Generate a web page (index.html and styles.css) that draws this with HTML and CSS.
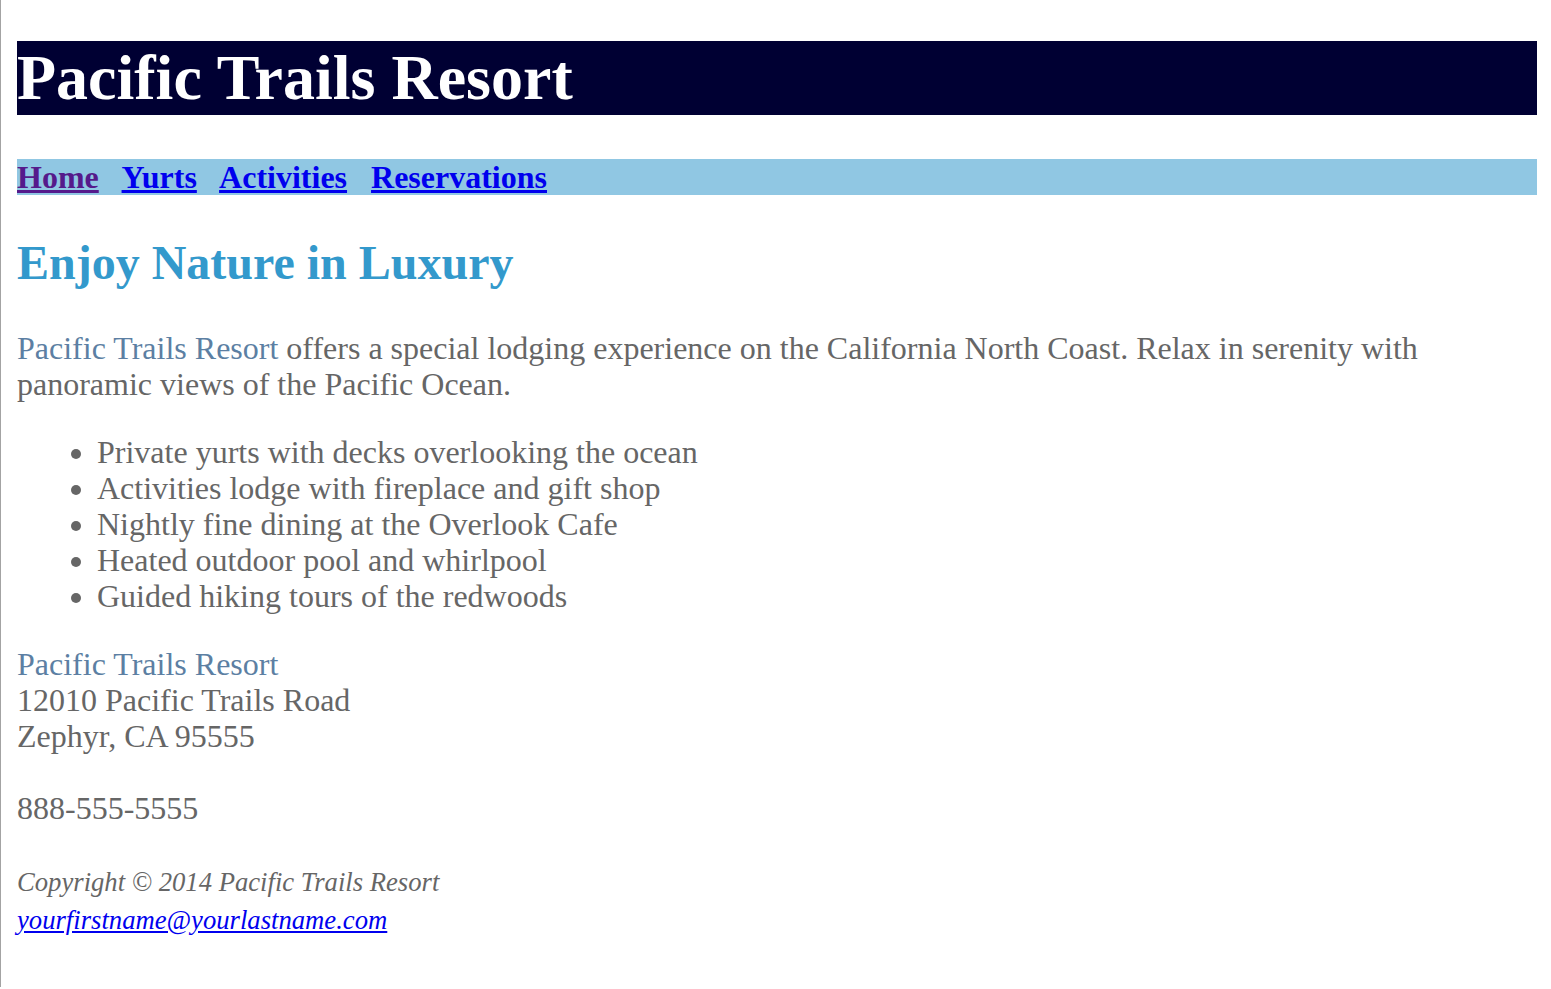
FILE: index.html
```html
<!DOCTYPE html>
<html lang="en">
<head>
<meta charset="utf-8">
<title>Pacific Trails Resort</title>
<link rel="stylesheet" href="styles.css">
</head>
<body>
<div class="wrapper">
  <header class="site-header">
    <h1 class="site-title">Pacific Trails Resort</h1>
  </header>
  <nav class="site-nav"><a class="nav-link visited" href="#">Home</a>&nbsp;&nbsp; <a class="nav-link" href="#">Yurts</a>&nbsp;&nbsp; <a class="nav-link" href="#">Activities</a>&nbsp;&nbsp; <a class="nav-link" href="#">Reservations</a></nav>
  <main class="content">
    <h2 class="headline">Enjoy Nature in Luxury</h2>
    <p class="intro"><span class="resort">Pacific Trails Resort</span> offers a special lodging experience on the California North Coast. Relax in serenity with panoramic views of the Pacific Ocean.</p>
    <ul class="features">
      <li>Private yurts with decks overlooking the ocean</li>
      <li>Activities lodge with fireplace and gift shop</li>
      <li>Nightly fine dining at the Overlook Cafe</li>
      <li>Heated outdoor pool and whirlpool</li>
      <li>Guided hiking tours of the redwoods</li>
    </ul>
    <div class="contact">
      <span class="resort">Pacific Trails Resort</span><br>
      12010 Pacific Trails Road<br>
      Zephyr, CA 95555<br><br>
      888-555-5555<br><br>
    </div>
  </main>
  <footer class="site-footer"><small class="copy">Copyright &copy; 2014 Pacific Trails Resort</small><br><a class="mail" href="#">yourfirstname@yourlastname.com</a></footer>
</div>
</body>
</html>
```

FILE: styles.css
```css
html {
  border-left: 1px solid #a3a3a3;
  min-height: 987px;
  box-sizing: border-box;
}

body {
  margin: 0;
  padding: 41px 14px 40px 16px;
  font-family: "Liberation Serif", "Times New Roman", serif;
  font-size: 32px;
  line-height: 36px;
  color: #666666;
  background: #ffffff;
}

.site-header {
  background: #000033;
}

.site-title {
  margin: 0;
  font-size: 64px;
  line-height: 74px;
  font-weight: bold;
  color: #ffffff;
}

.site-nav {
  margin-top: 44px;
  background: #90c7e3;
  font-weight: bold;
  line-height: 36px;
  height: 36px;
}

.nav-link {
  color: #0000ee;
}

.nav-link.visited {
  color: #551a8b;
}

.headline {
  margin: 40px 0 0;
  font-size: 48px;
  line-height: 55px;
  font-weight: bold;
  color: #3399cc;
}

.intro {
  margin: 40px 0 32px;
}

.resort {
  color: #5c7fa3;
}

.features {
  margin: 32px 0;
  padding-left: 80px;
}

.contact {
  margin: 0;
}

.site-footer {
  margin: 0;
}

.copy {
  font-style: italic;
  font-size: 26.67px;
}

.mail {
  color: #0000ee;
  font-style: italic;
  font-size: 26.67px;
}
```
